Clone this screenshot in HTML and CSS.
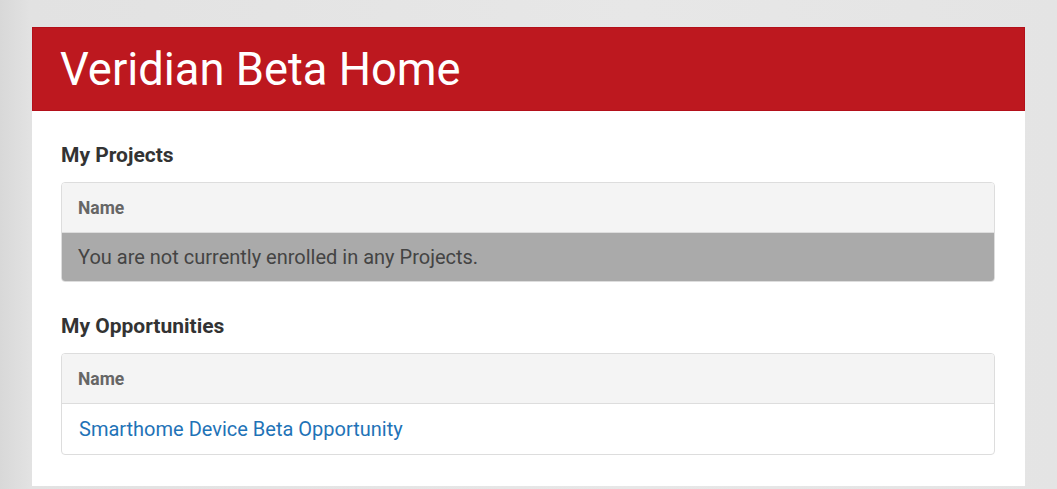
FILE: index.html
```html
<!DOCTYPE html>
<html>
<head>
<meta charset="utf-8">
<link rel="stylesheet" href="styles.css">
</head>
<body>
<div class="page">
  <div class="card">
    <div class="card-header">
      <h1 class="title">Veridian Beta Home</h1>
    </div>
    <div class="card-body">
      <section class="section">
        <h2 class="section-title">My Projects</h2>
        <div class="table">
          <div class="table-head">Name</div>
          <div class="table-row empty">You are not currently enrolled in any Projects.</div>
        </div>
      </section>
      <section class="section">
        <h2 class="section-title">My Opportunities</h2>
        <div class="table">
          <div class="table-head">Name</div>
          <div class="table-row tall"><a class="link" href="#">Smarthome Device Beta Opportunity</a></div>
        </div>
      </section>
    </div>
  </div>
</div>
</body>
</html>
```

FILE: styles.css
```css
html, body {
  margin: 0;
  padding: 0;
}
body {
  background: linear-gradient(90deg, #d8d8d8 0px, #e2e2e2 30px, #e7e7e7 60%, #e4e4e4 100%);
  font-family: Roboto, "Liberation Sans", sans-serif;
  height: 489px;
  overflow: hidden;
}
.page {
  padding: 27px 32px 0 32px;
}
.card {
  width: 993px;
  background: #ffffff;
}
.card-header {
  background: #bd181f;
  border: 1px solid #b3101a;
  height: 82px;
  display: flex;
  align-items: center;
  padding-left: 27px;
}
.title {
  margin: 0;
  color: #ffffff;
  font-weight: 400;
  font-size: 45.3px;
  line-height: 1;
  padding-top: 2px;
}
.card-body {
  padding: 31px 30px 31px 29px;
}
.section + .section {
  margin-top: 31px;
}
.section-title {
  margin: 0 0 14px 0;
  font-size: 21px;
  line-height: 26px;
  font-weight: 700;
  color: #333333;
}
.table {
  border: 1px solid #dddddd;
  border-radius: 4px;
  overflow: hidden;
}
.table-head {
  background: #f4f4f4;
  height: 49px;
  display: flex;
  align-items: center;
  padding: 0 16px;
  font-size: 17.5px;
  font-weight: 700;
  color: #666666;
  border-bottom: 1px solid #dddddd;
}
.table-row {
  height: 48px;
  display: flex;
  align-items: center;
  padding: 0 16px;
  font-size: 20px;
  color: #555555;
}
.table-row.tall {
  height: 50px;
}
.table-row.empty {
  background: #aaaaaa;
  color: #444444;
}
.link {
  color: #1f73b7;
  text-decoration: none;
  padding-left: 1px;
}
```
